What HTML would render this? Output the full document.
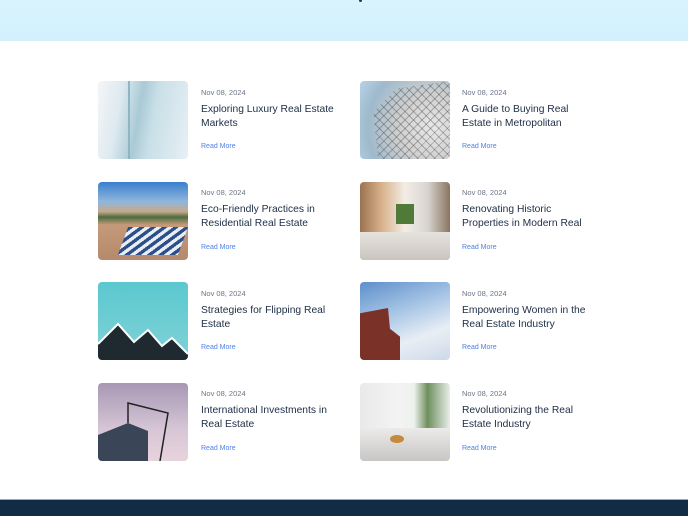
<!DOCTYPE html>
<html><head><meta charset="utf-8"><style>
*{margin:0;padding:0;box-sizing:border-box}
body{width:688px;height:516px;background:#fff;position:relative;overflow:hidden;font-family:"Liberation Sans",sans-serif}
.hdr{position:absolute;left:0;top:0;width:688px;height:41px;background:linear-gradient(#d9f3fd,#d2f1fd)}
.ftr{position:absolute;left:0;top:499px;width:688px;height:17px;background:#132c45;border-top:1px solid #9aa7b3}
.img{position:absolute;width:90px;height:78px;border-radius:4px;overflow:hidden}
.t{position:absolute}
.d{font-size:7.5px;color:#6b7486}
.h{font-size:10.3px;color:#1d2e45;line-height:13.5px;margin-top:6px;width:134px}
.r{position:absolute;font-size:7px;color:#4f80e6}
</style></head><body>
<div class="hdr"><div style="position:absolute;left:359px;top:0;width:3px;height:2px;background:#2a3a4a;border-radius:0 0 2px 2px"></div></div>

<!-- row1 -->
<div class="img" style="left:98px;top:81px;background:linear-gradient(100deg,#f4f6f8 0%,#dde9ef 25%,#a9cad6 45%,#c9dfe7 60%,#e6f0f4 100%)"><div style="position:absolute;left:30px;top:0;width:2px;height:78px;background:#8fb4c2"></div></div>
<div class="img" style="left:360px;top:81px;background:radial-gradient(circle at 80% 60%,#e8e8e8 0,#cfcfcf 40%,#9fb9cc 75%,#b7d3e6 100%)"><div style="position:absolute;inset:0;background:repeating-linear-gradient(45deg,transparent 0 5px,rgba(60,60,60,.35) 5px 6px),repeating-linear-gradient(-45deg,transparent 0 5px,rgba(60,60,60,.35) 5px 6px);clip-path:polygon(20% 100%,15% 40%,40% 10%,100% 0,100% 100%)"></div></div>
<div class="t" style="left:201px;top:88px"><div class="d">Nov 08, 2024</div><div class="h">Exploring Luxury Real Estate Markets</div></div>
<div class="r" style="left:201px;top:143px">Read More</div>
<div class="t" style="left:462px;top:88px"><div class="d">Nov 08, 2024</div><div class="h">A Guide to Buying Real Estate in Metropolitan</div></div>
<div class="r" style="left:462px;top:143px">Read More</div>

<!-- row2 -->
<div class="img" style="left:98px;top:182px;background:linear-gradient(#3a7fcf 0%,#8fb6dc 25%,#c7a98b 38%,#4d6b3e 45%,#c49a7a 55%,#b58a6c 100%)"><div style="position:absolute;left:25px;top:45px;width:60px;height:28px;background:repeating-linear-gradient(135deg,#2c4f8a 0 4px,#e9eef5 4px 8px);transform:skewX(-20deg)"></div></div>
<div class="img" style="left:360px;top:182px;background:linear-gradient(90deg,#9c7350 0%,#d9b48d 25%,#f2ede6 50%,#d8d5d0 75%,#8a7460 100%)"><div style="position:absolute;left:36px;top:22px;width:18px;height:20px;background:#4f7a3a"></div><div style="position:absolute;left:0;top:50px;width:90px;height:28px;background:linear-gradient(#e6e3df,#c9c4bd)"></div></div>
<div class="t" style="left:201px;top:188px"><div class="d">Nov 08, 2024</div><div class="h">Eco-Friendly Practices in Residential Real Estate</div></div>
<div class="r" style="left:201px;top:244px">Read More</div>
<div class="t" style="left:462px;top:188px"><div class="d">Nov 08, 2024</div><div class="h">Renovating Historic Properties in Modern Real</div></div>
<div class="r" style="left:462px;top:244px">Read More</div>

<!-- row3 -->
<div class="img" style="left:98px;top:282px;background:linear-gradient(#5cc7cf,#7fd3d7)"><svg width="90" height="78" style="position:absolute;left:0;top:0"><polygon points="0,78 0,62 20,42 36,60 50,48 64,64 74,56 90,72 90,78" fill="#1e2a30"/><polyline points="0,62 20,42 36,60 50,48 64,64 74,56 90,72" fill="none" stroke="#fff" stroke-width="2"/></svg></div>
<div class="img" style="left:360px;top:282px;background:linear-gradient(160deg,#5d8fca 0%,#a9c6e6 40%,#e9eef5 70%,#cdd9e8 100%)"><div style="position:absolute;left:0;top:26px;width:40px;height:52px;background:#7a3128;clip-path:polygon(0 10%,70% 0,75% 40%,100% 55%,100% 100%,0 100%)"></div></div>
<div class="t" style="left:201px;top:289px"><div class="d">Nov 08, 2024</div><div class="h">Strategies for Flipping Real Estate</div></div>
<div class="r" style="left:201px;top:344px">Read More</div>
<div class="t" style="left:462px;top:289px"><div class="d">Nov 08, 2024</div><div class="h">Empowering Women in the Real Estate Industry</div></div>
<div class="r" style="left:462px;top:344px">Read More</div>

<!-- row4 -->
<div class="img" style="left:98px;top:383px;background:linear-gradient(#a797b4,#d7c6d6 60%,#e7d3dc)"><svg width="90" height="78" style="position:absolute;left:0;top:0"><polygon points="0,52 30,40 50,48 50,78 0,78" fill="#3a4658"/><polyline points="30,40 30,20 70,30 62,78 M30,20 55,12 70,30" fill="none" stroke="#222" stroke-width="1.5"/></svg></div>
<div class="img" style="left:360px;top:383px;background:linear-gradient(90deg,#e9e9e9 0%,#f3f3f3 40%,#eef2ee 60%,#6f8f5e 75%,#e8eee9 100%)"><div style="position:absolute;left:0;top:45px;width:90px;height:33px;background:linear-gradient(#ecebea,#c8c6c4)"></div><div style="position:absolute;left:30px;top:52px;width:14px;height:8px;border-radius:50%;background:#c68a3e"></div></div>
<div class="t" style="left:201px;top:389px"><div class="d">Nov 08, 2024</div><div class="h">International Investments in Real Estate</div></div>
<div class="r" style="left:201px;top:445px">Read More</div>
<div class="t" style="left:462px;top:389px"><div class="d">Nov 08, 2024</div><div class="h">Revolutionizing the Real Estate Industry</div></div>
<div class="r" style="left:462px;top:445px">Read More</div>

<div class="ftr"></div>
</body></html>
